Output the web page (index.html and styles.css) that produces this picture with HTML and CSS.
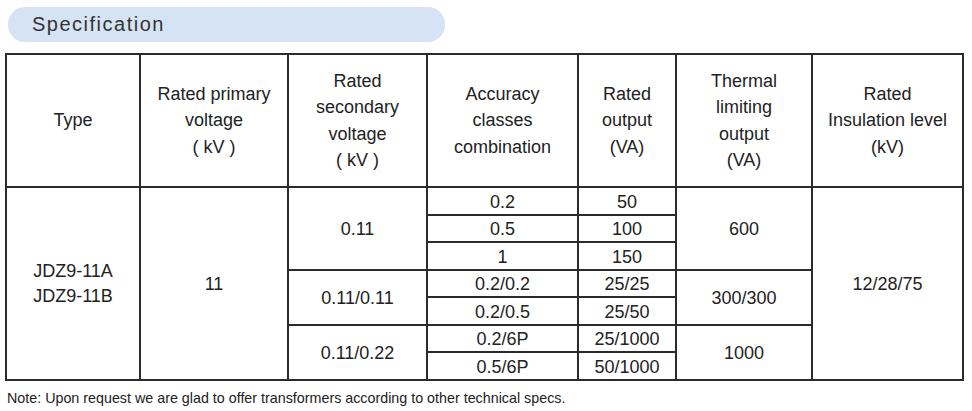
FILE: index.html
```html
<!DOCTYPE html>
<html>
<head>
<meta charset="utf-8">
<link rel="stylesheet" href="styles.css">
</head>
<body>
<div class="page">
  <div class="title-pill">Specification</div>
  <table class="spec">
    <colgroup>
      <col class="c1"><col class="c2"><col class="c3"><col class="c4"><col class="c5"><col class="c6"><col class="c7">
    </colgroup>
    <thead>
      <tr>
        <th>Type</th>
        <th>Rated primary<br>voltage<br>( kV )</th>
        <th>Rated<br>secondary<br>voltage<br>( kV )</th>
        <th>Accuracy<br>classes<br>combination</th>
        <th>Rated<br>output<br>(VA)</th>
        <th>Thermal<br>limiting<br>output<br>(VA)</th>
        <th>Rated<br>Insulation level<br>(kV)</th>
      </tr>
    </thead>
    <tbody>
      <tr>
        <td rowspan="7" class="types">JDZ9-11A<br>JDZ9-11B</td>
        <td rowspan="7">11</td>
        <td rowspan="3">0.11</td>
        <td>0.2</td>
        <td>50</td>
        <td rowspan="3">600</td>
        <td rowspan="7">12/28/75</td>
      </tr>
      <tr><td>0.5</td><td>100</td></tr>
      <tr><td>1</td><td>150</td></tr>
      <tr>
        <td rowspan="2">0.11/0.11</td>
        <td>0.2/0.2</td>
        <td>25/25</td>
        <td rowspan="2">300/300</td>
      </tr>
      <tr><td>0.2/0.5</td><td>25/50</td></tr>
      <tr>
        <td rowspan="2">0.11/0.22</td>
        <td>0.2/6P</td>
        <td>25/1000</td>
        <td rowspan="2">1000</td>
      </tr>
      <tr><td>0.5/6P</td><td>50/1000</td></tr>
    </tbody>
  </table>
  <p class="note">Note: Upon request we are glad to offer transformers according to other technical specs.</p>
</div>
</body>
</html>
```
FILE: styles.css
```css
html, body {
  margin: 0;
  padding: 0;
  background: #ffffff;
}
body {
  font-family: "Liberation Sans", Arial, sans-serif;
  color: #222222;
}
.page {
  padding: 7px 0 0 0;
}
.title-pill {
  margin-left: 8px;
  width: 437px;
  height: 35px;
  box-sizing: border-box;
  border-radius: 17px;
  background: #d6e3f4;
  color: #333333;
  font-size: 20px;
  letter-spacing: 1.5px;
  line-height: 35px;
  padding-left: 24px;
}
.spec {
  margin: 11px 0 0 5px;
  border-collapse: collapse;
  table-layout: fixed;
  width: 957px;
  border: 2.5px solid #2b2b2b;
}
.c1 { width: 134px; }
.c2 { width: 148px; }
.c3 { width: 139px; }
.c4 { width: 151px; }
.c5 { width: 98px; }
.c6 { width: 136px; }
.c7 { width: 151px; }
.spec th, .spec td {
  border: 2px solid #2b2b2b;
  text-align: center;
  vertical-align: middle;
  padding: 0;
  font-size: 18px;
  color: #222222;
}
.spec th {
  font-weight: normal;
  height: 131px;
  line-height: 26.5px;
}
.spec td {
  height: 23.5px;
  padding-top: 2px;
  line-height: 22px;
}
.spec td.types {
  line-height: 25px;
}
.note {
  margin: 9px 0 0 7px;
  font-size: 14.3px;
  color: #222222;
}
```
